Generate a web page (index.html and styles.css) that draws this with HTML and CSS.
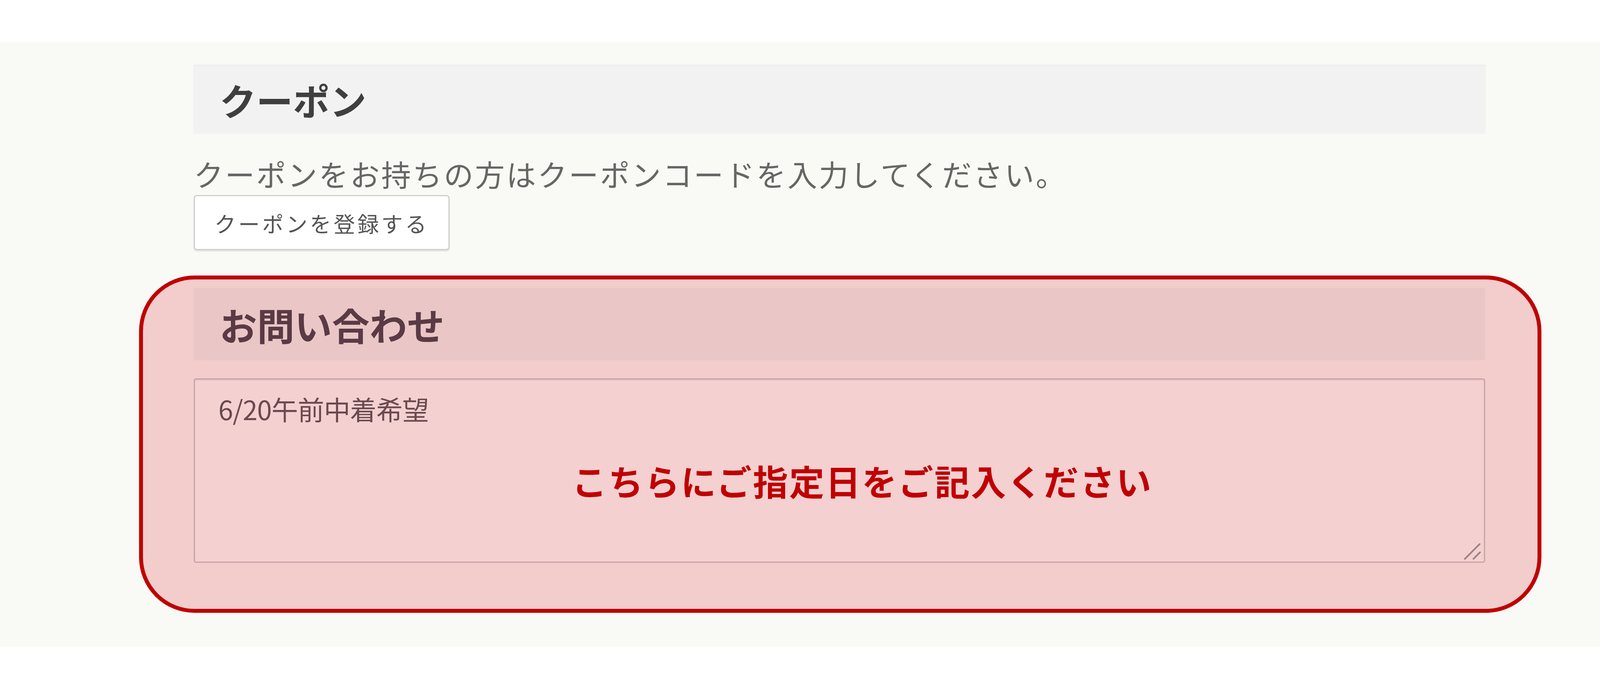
FILE: index.html
```html
<!DOCTYPE html>
<html lang="ja">
<head>
  <meta charset="UTF-8" />
  <meta name="viewport" content="width=device-width, initial-scale=1.0"/>
  <title>クーポン・お問い合わせ</title>
  <link rel="stylesheet" href="styles.css">
</head>
<body>

  <div class="page">
    <section class="coupon">
      <h2 class="section-title">クーポン</h2>
      <p class="coupon-note">クーポンをお持ちの方はクーポンコードを入力してください。</p>
      <button class="coupon-btn" type="button">クーポンを登録する</button>
    </section>

    <section class="contact">
      <h2 class="section-title contact-title">お問い合わせ</h2>
      <div class="field">
        <textarea class="contact-text" name="message">6/20午前中着希望</textarea>
        <svg class="grip" width="48" height="48" viewBox="0 0 48 48">
          <line x1="4" y1="44" x2="42" y2="6" />
          <line x1="26" y1="44" x2="43" y2="27" />
        </svg>
        <p class="field-hint">こちらにご指定日をご記入ください</p>
      </div>
    </section>
  </div>

</body>
</html>
```

FILE: styles.css
```css
html, body {
  margin: 0;
  padding: 0;
  background: #fff;
  font-family: "Noto Sans CJK JP", "Noto Sans", sans-serif;
}

.page {
  margin-top: 107px;
  background: #f9f9f5;
  padding: 61px 0 88px 496px;
}

.coupon,
.contact {
  width: 3306px;
}

.section-title {
  margin: 0;
  height: 174px;
  display: flex;
  align-items: center;
  padding-left: 66px;
  background: #f2f2f2;
  box-shadow: 0 -2px 3px rgba(220, 220, 235, 0.6);
  font-size: 94px;
  font-weight: 700;
  color: #3f3f3f;
}

.coupon-note {
  margin: 48px 0 0;
  line-height: 109px;
  font-size: 76px;
  letter-spacing: 4px;
  color: #666;
}

.coupon-btn {
  display: block;
  box-sizing: border-box;
  width: 655px;
  height: 141px;
  padding: 0;
  background: #fff;
  border: 3px solid #cfcfcf;
  border-radius: 8px;
  box-shadow: 0 3px 3px rgba(0, 0, 0, 0.1);
  font-family: "Noto Sans CJK JP", sans-serif;
  font-size: 55px;
  letter-spacing: 6px;
  color: #555;
}

/* highlighted block */
.contact {
  margin: 65px 0 0 -140px;
  padding: 21px 134px 118px 130px;
  background: #f2cdcc;
  border: 10px solid #bf0000;
  border-radius: 142px;
}

.contact-title {
  height: 186px;
  background: #eac6c6;
  box-shadow: none;
  font-size: 96px;
  color: #5a3a44;
}

.field {
  position: relative;
  margin-top: 46px;
}

.contact-text {
  display: block;
  box-sizing: border-box;
  width: 100%;
  height: 472px;
  margin: 0;
  padding: 24px 60px;
  background: #f4d0d1;
  border: 3px solid #c9a4a7;
  border-radius: 6px;
  box-shadow: inset 0 2px 3px rgba(120, 60, 70, 0.15);
  resize: none;
  font-family: "Noto Sans CJK JP", sans-serif;
  font-size: 68px;
  line-height: 1.5;
  letter-spacing: -1px;
  color: #6a4a50;
}

.grip {
  position: absolute;
  right: 8px;
  bottom: 6px;
  stroke: #9c7f84;
  stroke-width: 4;
  stroke-linecap: round;
}

.field-hint {
  position: absolute;
  left: 968px;
  top: 207px;
  margin: 0;
  line-height: 108px;
  font-size: 90px;
  font-weight: 700;
  letter-spacing: 3px;
  color: #c00000;
  pointer-events: none;
}
```
